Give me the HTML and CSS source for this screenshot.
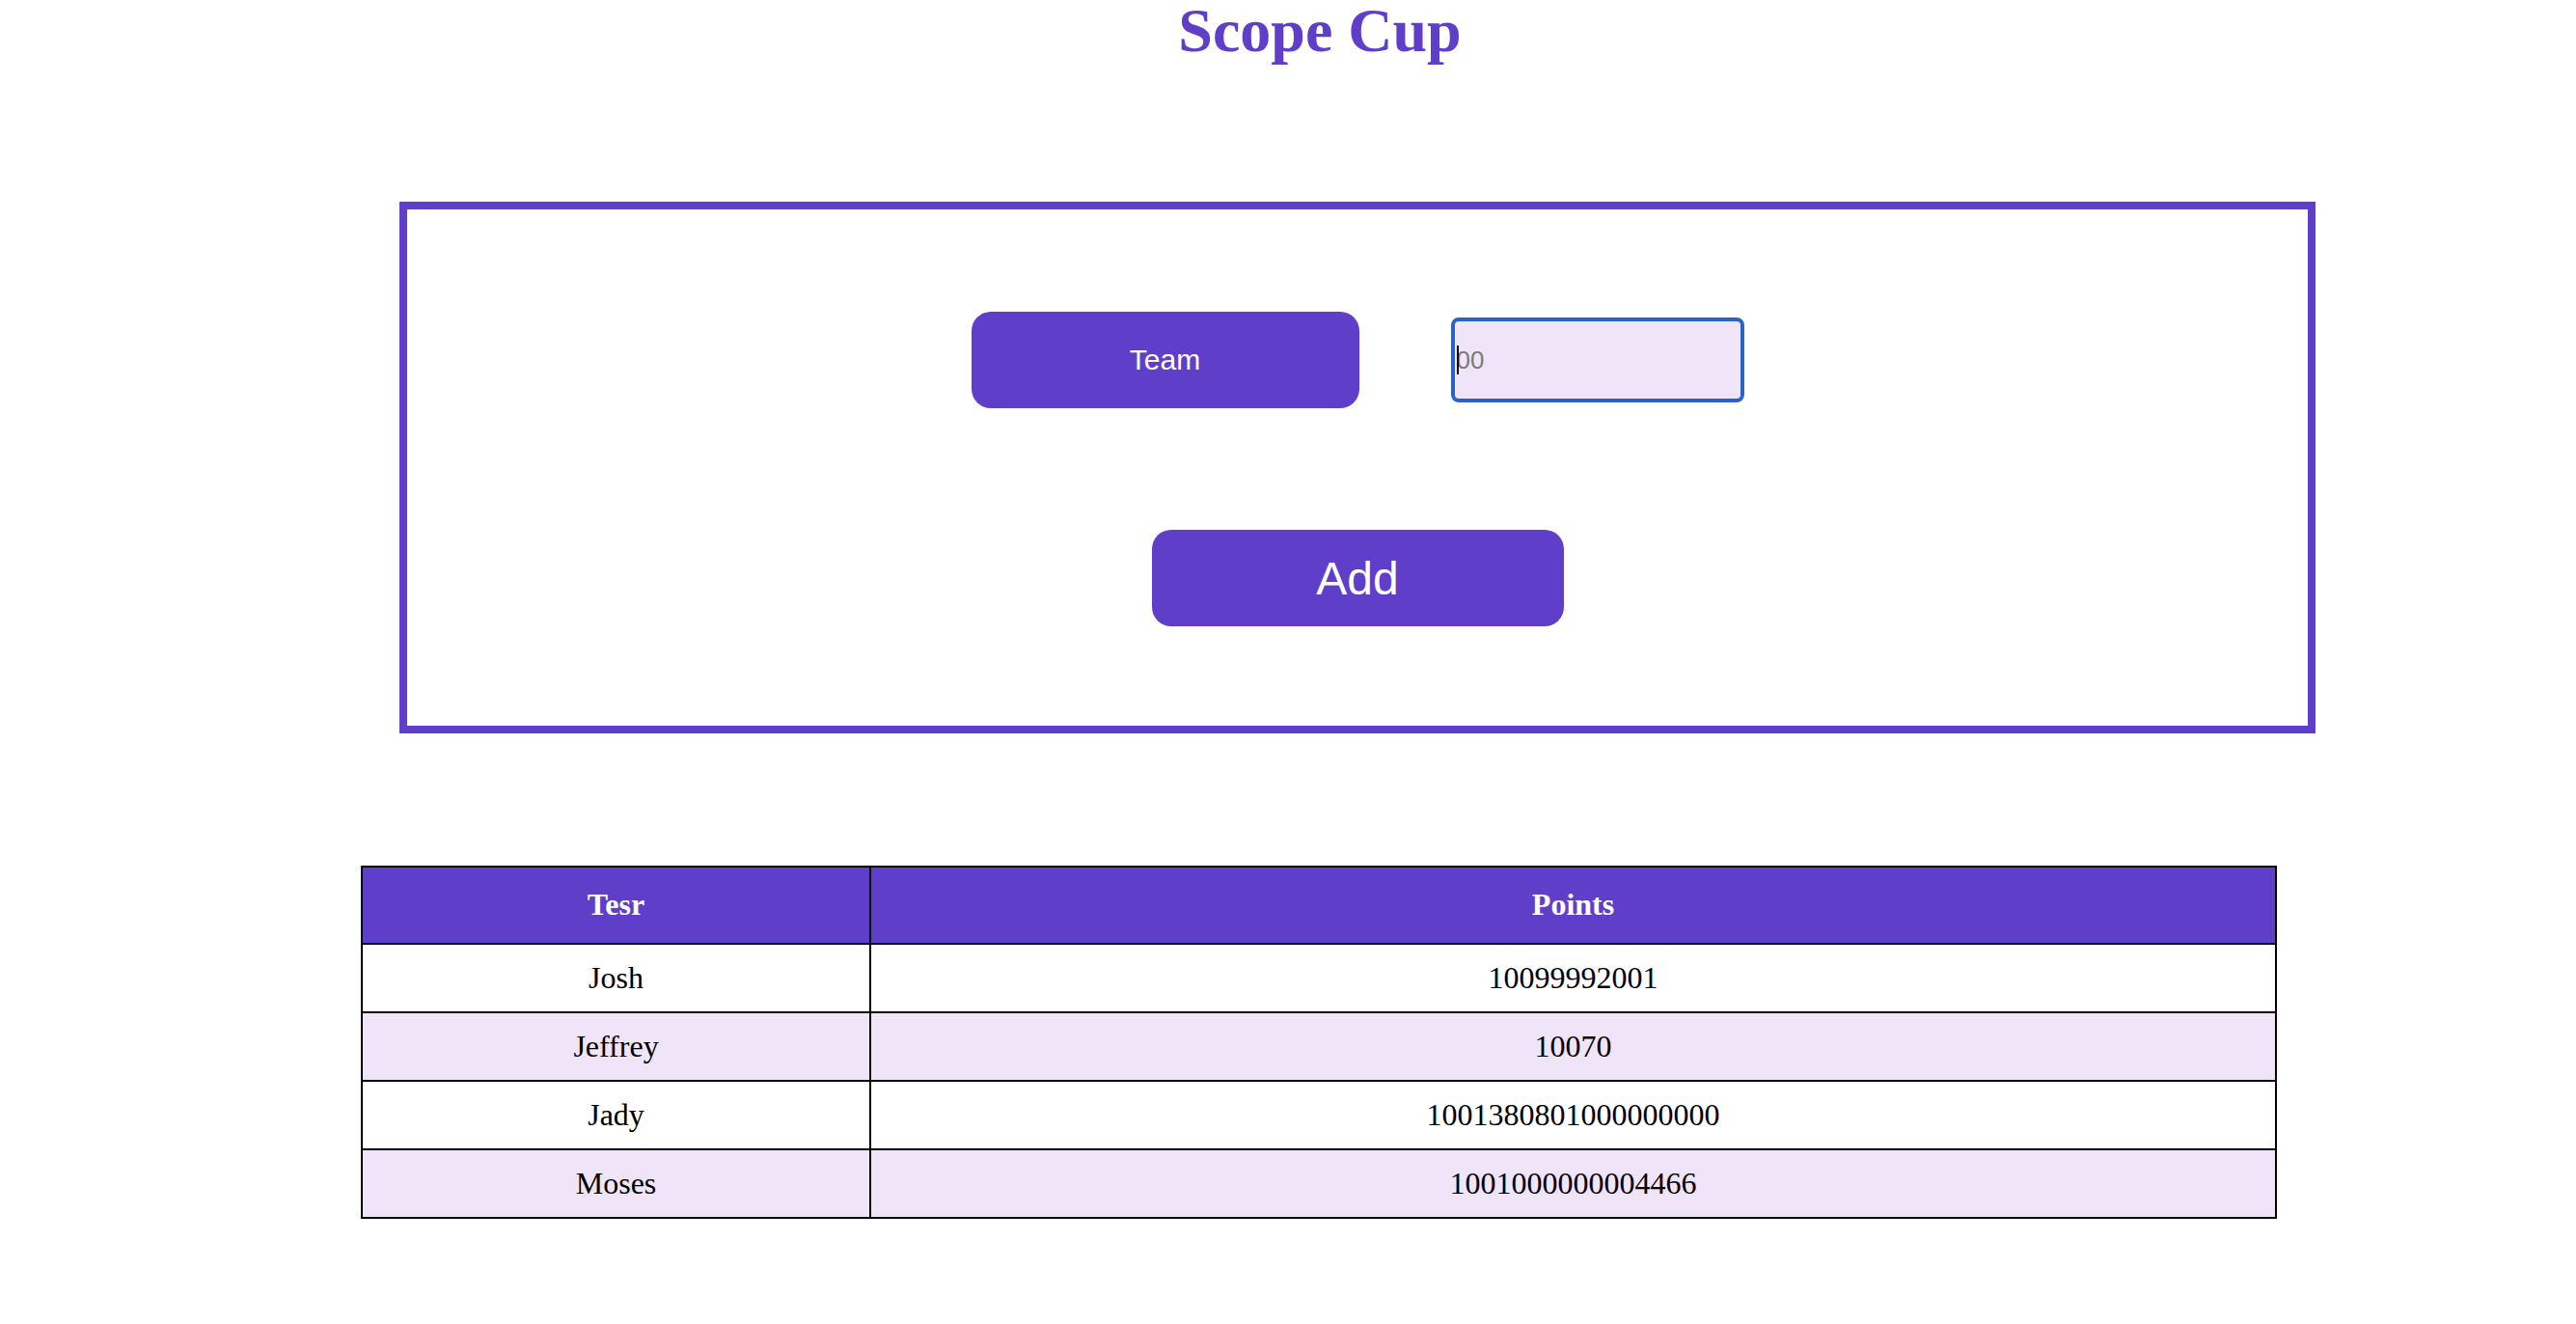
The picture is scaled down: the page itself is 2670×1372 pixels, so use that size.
FILE: index.html
```html
<!DOCTYPE html>
<html lang="en">
<head>
<meta charset="utf-8">
<title>Scope Cup</title>
<link rel="stylesheet" href="styles.css">
</head>
<body>
<div class="page">
  <h1 class="title">Scope Cup</h1>
  <section class="card">
    <div class="entry-row">
      <button class="team-btn" type="button">Team</button>
      <div class="field">
        <input class="points-input" type="text" placeholder="00">
        <span class="caret"></span>
      </div>
    </div>
    <button class="add-btn" type="button">Add</button>
  </section>
  <table class="scores">
    <colgroup>
      <col class="col-name">
      <col class="col-points">
    </colgroup>
    <thead>
      <tr><th>Tesr</th><th>Points</th></tr>
    </thead>
    <tbody>
      <tr><td>Josh</td><td>10099992001</td></tr>
      <tr><td>Jeffrey</td><td>10070</td></tr>
      <tr><td>Jady</td><td>1001380801000000000</td></tr>
      <tr><td>Moses</td><td>1001000000004466</td></tr>
    </tbody>
  </table>
</div>
</body>
</html>
```

FILE: styles.css
```css
html, body {
  margin: 0;
  padding: 0;
  background: #ffffff;
}

body {
  font-family: "Liberation Serif", "Times New Roman", serif;
}

.page {
  padding-left: 66px;
}

.title {
  margin: 0;
  text-align: center;
  font-family: "Liberation Serif", "Times New Roman", serif;
  font-weight: bold;
  font-size: 64px;
  line-height: 64px;
  color: #5f3fc9;
}

.card {
  box-sizing: border-box;
  width: 1986px;
  height: 551px;
  margin: 145px 0 0 348px;
  border: 8px solid #5f3fc9;
  padding: 106px 0 0 0;
  display: flex;
  flex-direction: column;
  align-items: center;
}

.entry-row {
  display: flex;
  align-items: center;
  gap: 95px;
  height: 100px;
}

.team-btn,
.add-btn {
  border: none;
  background: #5f3fc9;
  color: #ffffff;
  font-family: "Liberation Sans", Arial, sans-serif;
  border-radius: 20px;
  padding: 0;
  cursor: pointer;
}

.team-btn {
  width: 402px;
  height: 100px;
  font-size: 30px;
}

.field {
  position: relative;
  width: 304px;
  height: 88px;
}

.points-input {
  box-sizing: border-box;
  width: 304px;
  height: 88px;
  border: 4px solid #2a62c9;
  border-radius: 8px;
  background: #f0e4f9;
  font-family: "Liberation Sans", Arial, sans-serif;
  font-size: 26px;
  padding: 0 0 0 2px;
  outline: none;
  color: #000;
}

.points-input::placeholder {
  color: #7a7a7a;
}

.caret {
  position: absolute;
  left: 6px;
  top: 29px;
  width: 2px;
  height: 30px;
  background: #000;
}

.add-btn {
  margin-top: 126px;
  width: 427px;
  height: 100px;
  font-size: 48px;
}

.scores {
  margin: 137px 0 0 308px;
  width: 1986px;
  border-collapse: collapse;
  border: 2px solid #000;
  font-family: "Liberation Serif", "Times New Roman", serif;
  font-size: 32px;
}

.col-name {
  width: 527px;
}

.scores th,
.scores td {
  border: 2px solid #000;
  text-align: center;
  line-height: 37px;
  padding: 16px 0;
}

.scores th {
  background: #5f3fc9;
  color: #ffffff;
  font-weight: bold;
  padding: 20px 0 21px;
}

.scores tbody tr:nth-child(even) td {
  background: #f0e4f9;
}

.scores tbody tr:nth-child(odd) td {
  background: #ffffff;
}
```
